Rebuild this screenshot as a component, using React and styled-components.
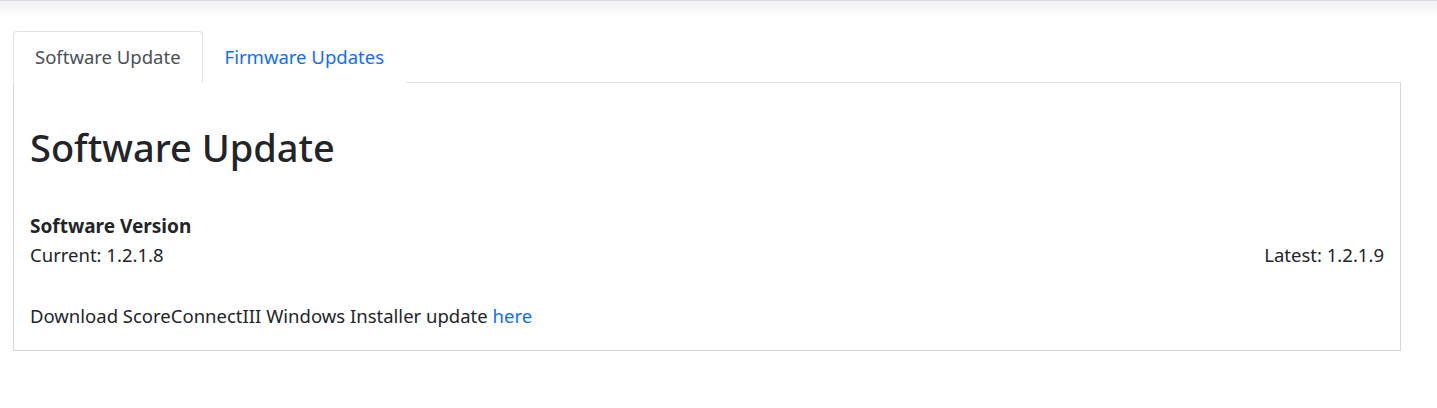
import React, { useState } from 'react';
import styled, { createGlobalStyle } from 'styled-components';

const GlobalStyle = createGlobalStyle`
  body {
    margin: 0;
    background: #fff;
    font-family: "Noto Sans", "Open Sans", sans-serif;
    color: #212529;
  }
`;

const TopShadow = styled.div`
  height: 16px;
  border-top: 1px solid #dcdde2;
  background: linear-gradient(#f0f0f2, #fff);
`;

const Page = styled.div`
  padding: 14px 36px 40px 13px;
`;

const TabBar = styled.ul`
  display: flex;
  list-style: none;
  margin: 0;
  padding: 0;
  border-bottom: 1px solid #dee2e6;
`;

const Tab = styled.li`
  margin-bottom: -1px;
  padding: 12px 21px 13px;
  font-size: 18.5px;
  line-height: 25px;
  cursor: pointer;
  border: 1px solid ${(p) => (p.$active ? '#dee2e6' : 'transparent')};
  border-bottom-color: ${(p) => (p.$active ? '#fff' : 'transparent')};
  border-radius: 4px 4px 0 0;
  background: #fff;
  color: ${(p) => (p.$active ? '#495057' : '#0d6efd')};
`;

const Panel = styled.div`
  border: 1px solid #d6d6d6;
  border-top: none;
  padding: 40px 16px 22px 16px;
`;

const Title = styled.h1`
  margin: 0 0 42px;
  font-size: 38px;
  font-weight: 500;
  line-height: 48px;
`;

const Label = styled.div`
  font-size: 19px;
  font-weight: 700;
  line-height: 27px;
`;

const VersionRow = styled.div`
  display: flex;
  justify-content: space-between;
  font-size: 18.5px;
  line-height: 24px;
  margin-top: 3px;
`;

const Note = styled.p`
  margin: 37px 0 0;
  font-size: 18.5px;
  line-height: 24px;
`;

const Link = styled.a`
  color: #0d6efd;
  text-decoration: none;
`;

export default function App() {
  const [tab, setTab] = useState(0);
  return (
    <>
      <GlobalStyle />
      <TopShadow />
      <Page>
        <TabBar>
          <Tab $active={tab === 0} onClick={() => setTab(0)}>Software Update</Tab>
          <Tab $active={tab === 1} onClick={() => setTab(1)}>Firmware Updates</Tab>
        </TabBar>
        <Panel>
          <Title>Software Update</Title>
          <Label>Software Version</Label>
          <VersionRow>
            <span>Current: 1.2.1.8</span>
            <span>Latest: 1.2.1.9</span>
          </VersionRow>
          <Note>
            Download ScoreConnectIII Windows Installer update <Link href="#">here</Link>
          </Note>
        </Panel>
      </Page>
    </>
  );
}
